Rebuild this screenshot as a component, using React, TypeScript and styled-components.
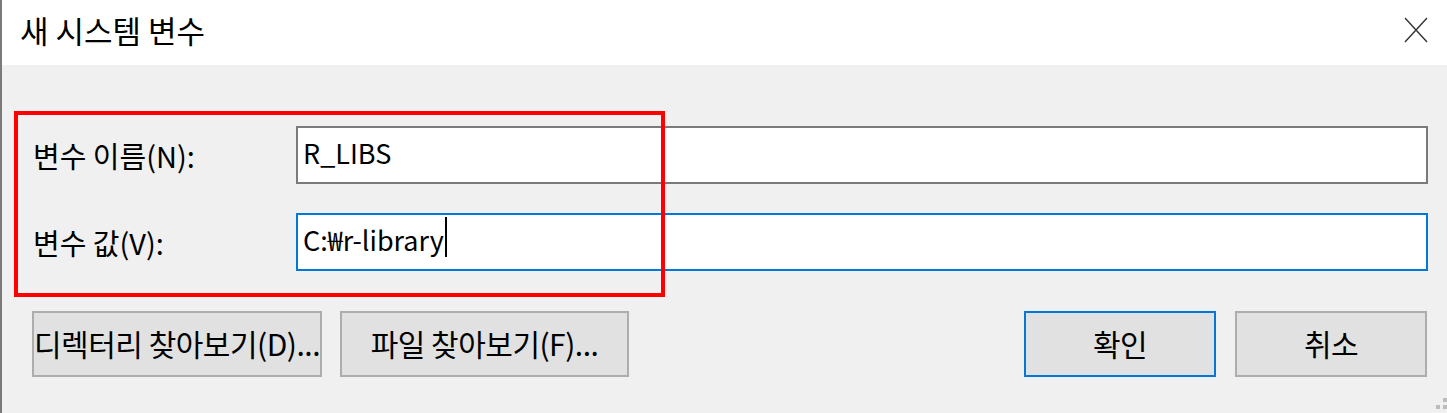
import React from "react";
import styled, { createGlobalStyle } from "styled-components";

const Global = createGlobalStyle`
  html, body { margin: 0; padding: 0; background: #f0f0f0; }
  body { font-family: "Noto Sans CJK KR", "Noto Sans", sans-serif; }
`;

const Window = styled.div`
  position: relative;
  width: 1447px;
  height: 413px;
  box-sizing: border-box;
  border-left: 2px solid #7a7a7a;
  background: #f0f0f0;
  display: flex;
  flex-direction: column;
  overflow: hidden;
`;

const TitleBar = styled.div`
  height: 65px;
  flex: none;
  background: #ffffff;
  display: flex;
  align-items: center;
  justify-content: space-between;
  padding: 0 19px 0 18px;
`;

const Title = styled.div`
  font-size: 31px;
  color: #000;
  margin-top: -7px;
`;

const CloseBtn = styled.div`
  width: 24px;
  height: 26px;
  display: flex;
  align-items: center;
  justify-content: center;
  margin-top: -5px;
`;

const Body = styled.div`
  position: relative;
  flex: 1;
  display: flex;
  flex-direction: column;
`;

const Fields = styled.div`
  display: grid;
  grid-template-columns: 263px 1fr;
  grid-auto-rows: 58px;
  row-gap: 29px;
  padding: 61px 19px 0 31px;
`;

const Label = styled.div`
  font-size: 29px;
  color: #000;
  display: flex;
  align-items: center;
`;

const TextBox = styled.div<{ $focused?: boolean }>`
  box-sizing: border-box;
  height: 58px;
  background: #fff;
  border: 2px solid ${(p) => (p.$focused ? "#0078d7" : "#7a7a7a")};
  display: flex;
  align-items: center;
  padding: 0 0 6px 5px;
  font-size: 27px;
  color: #000;
`;

const Caret = styled.span`
  display: inline-block;
  width: 2px;
  height: 40px;
  background: #000;
  margin-left: 1px;
  margin-top: -4px;
`;

const ButtonRow = styled.div`
  display: flex;
  align-items: center;
  padding: 0 20px 0 30px;
  margin-top: 40px;
`;

const Group = styled.div<{ $gap: number }>`
  display: flex;
  gap: ${(p) => p.$gap}px;
`;

const Spacer = styled.div`
  flex: 1;
`;

const Button = styled.div<{ $w: number; $default?: boolean }>`
  box-sizing: border-box;
  width: ${(p) => p.$w}px;
  height: 66px;
  background: #e1e1e1;
  border: 2px solid ${(p) => (p.$default ? "#0078d7" : "#adadad")};
  display: flex;
  align-items: center;
  justify-content: center;
  padding-bottom: 3px;
  font-size: 30px;
  color: #000;
  white-space: nowrap;
  letter-spacing: -0.5px;
`;

const Highlight = styled.div`
  position: absolute;
  left: 12px;
  top: 46px;
  width: 651px;
  height: 186px;
  box-sizing: border-box;
  border: 4px solid #ff0000;
  pointer-events: none;
`;

const Grip = styled.svg`
  position: absolute;
  right: 0;
  bottom: 3px;
`;

export default function App() {
  return (
    <>
      <Global />
      <Window>
        <TitleBar>
          <Title>새 시스템 변수</Title>
          <CloseBtn>
            <svg width="24" height="26" viewBox="0 0 24 26">
              <path d="M1 1 L23 25 M23 1 L1 25" stroke="#333" strokeWidth="1.4" fill="none" />
            </svg>
          </CloseBtn>
        </TitleBar>
        <Body>
          <Fields>
            <Label>변수 이름(N):</Label>
            <TextBox>R_LIBS</TextBox>
            <Label>변수 값(V):</Label>
            <TextBox $focused>
              C:₩r-library
              <Caret />
            </TextBox>
          </Fields>
          <ButtonRow>
            <Group $gap={18}>
              <Button $w={290}>디렉터리 찾아보기(D)...</Button>
              <Button $w={289}>파일 찾아보기(F)...</Button>
            </Group>
            <Spacer />
            <Group $gap={19}>
              <Button $w={192} $default>확인</Button>
              <Button $w={192}>취소</Button>
            </Group>
          </ButtonRow>
          <Highlight />
          <Grip width="12" height="12" viewBox="0 0 12 12">
            <rect x="8" y="0" width="4" height="4" fill="#bcbcbc" />
            <rect x="8" y="7" width="4" height="4" fill="#bcbcbc" />
            <rect x="1" y="7" width="4" height="4" fill="#bcbcbc" />
          </Grip>
        </Body>
      </Window>
    </>
  );
}
